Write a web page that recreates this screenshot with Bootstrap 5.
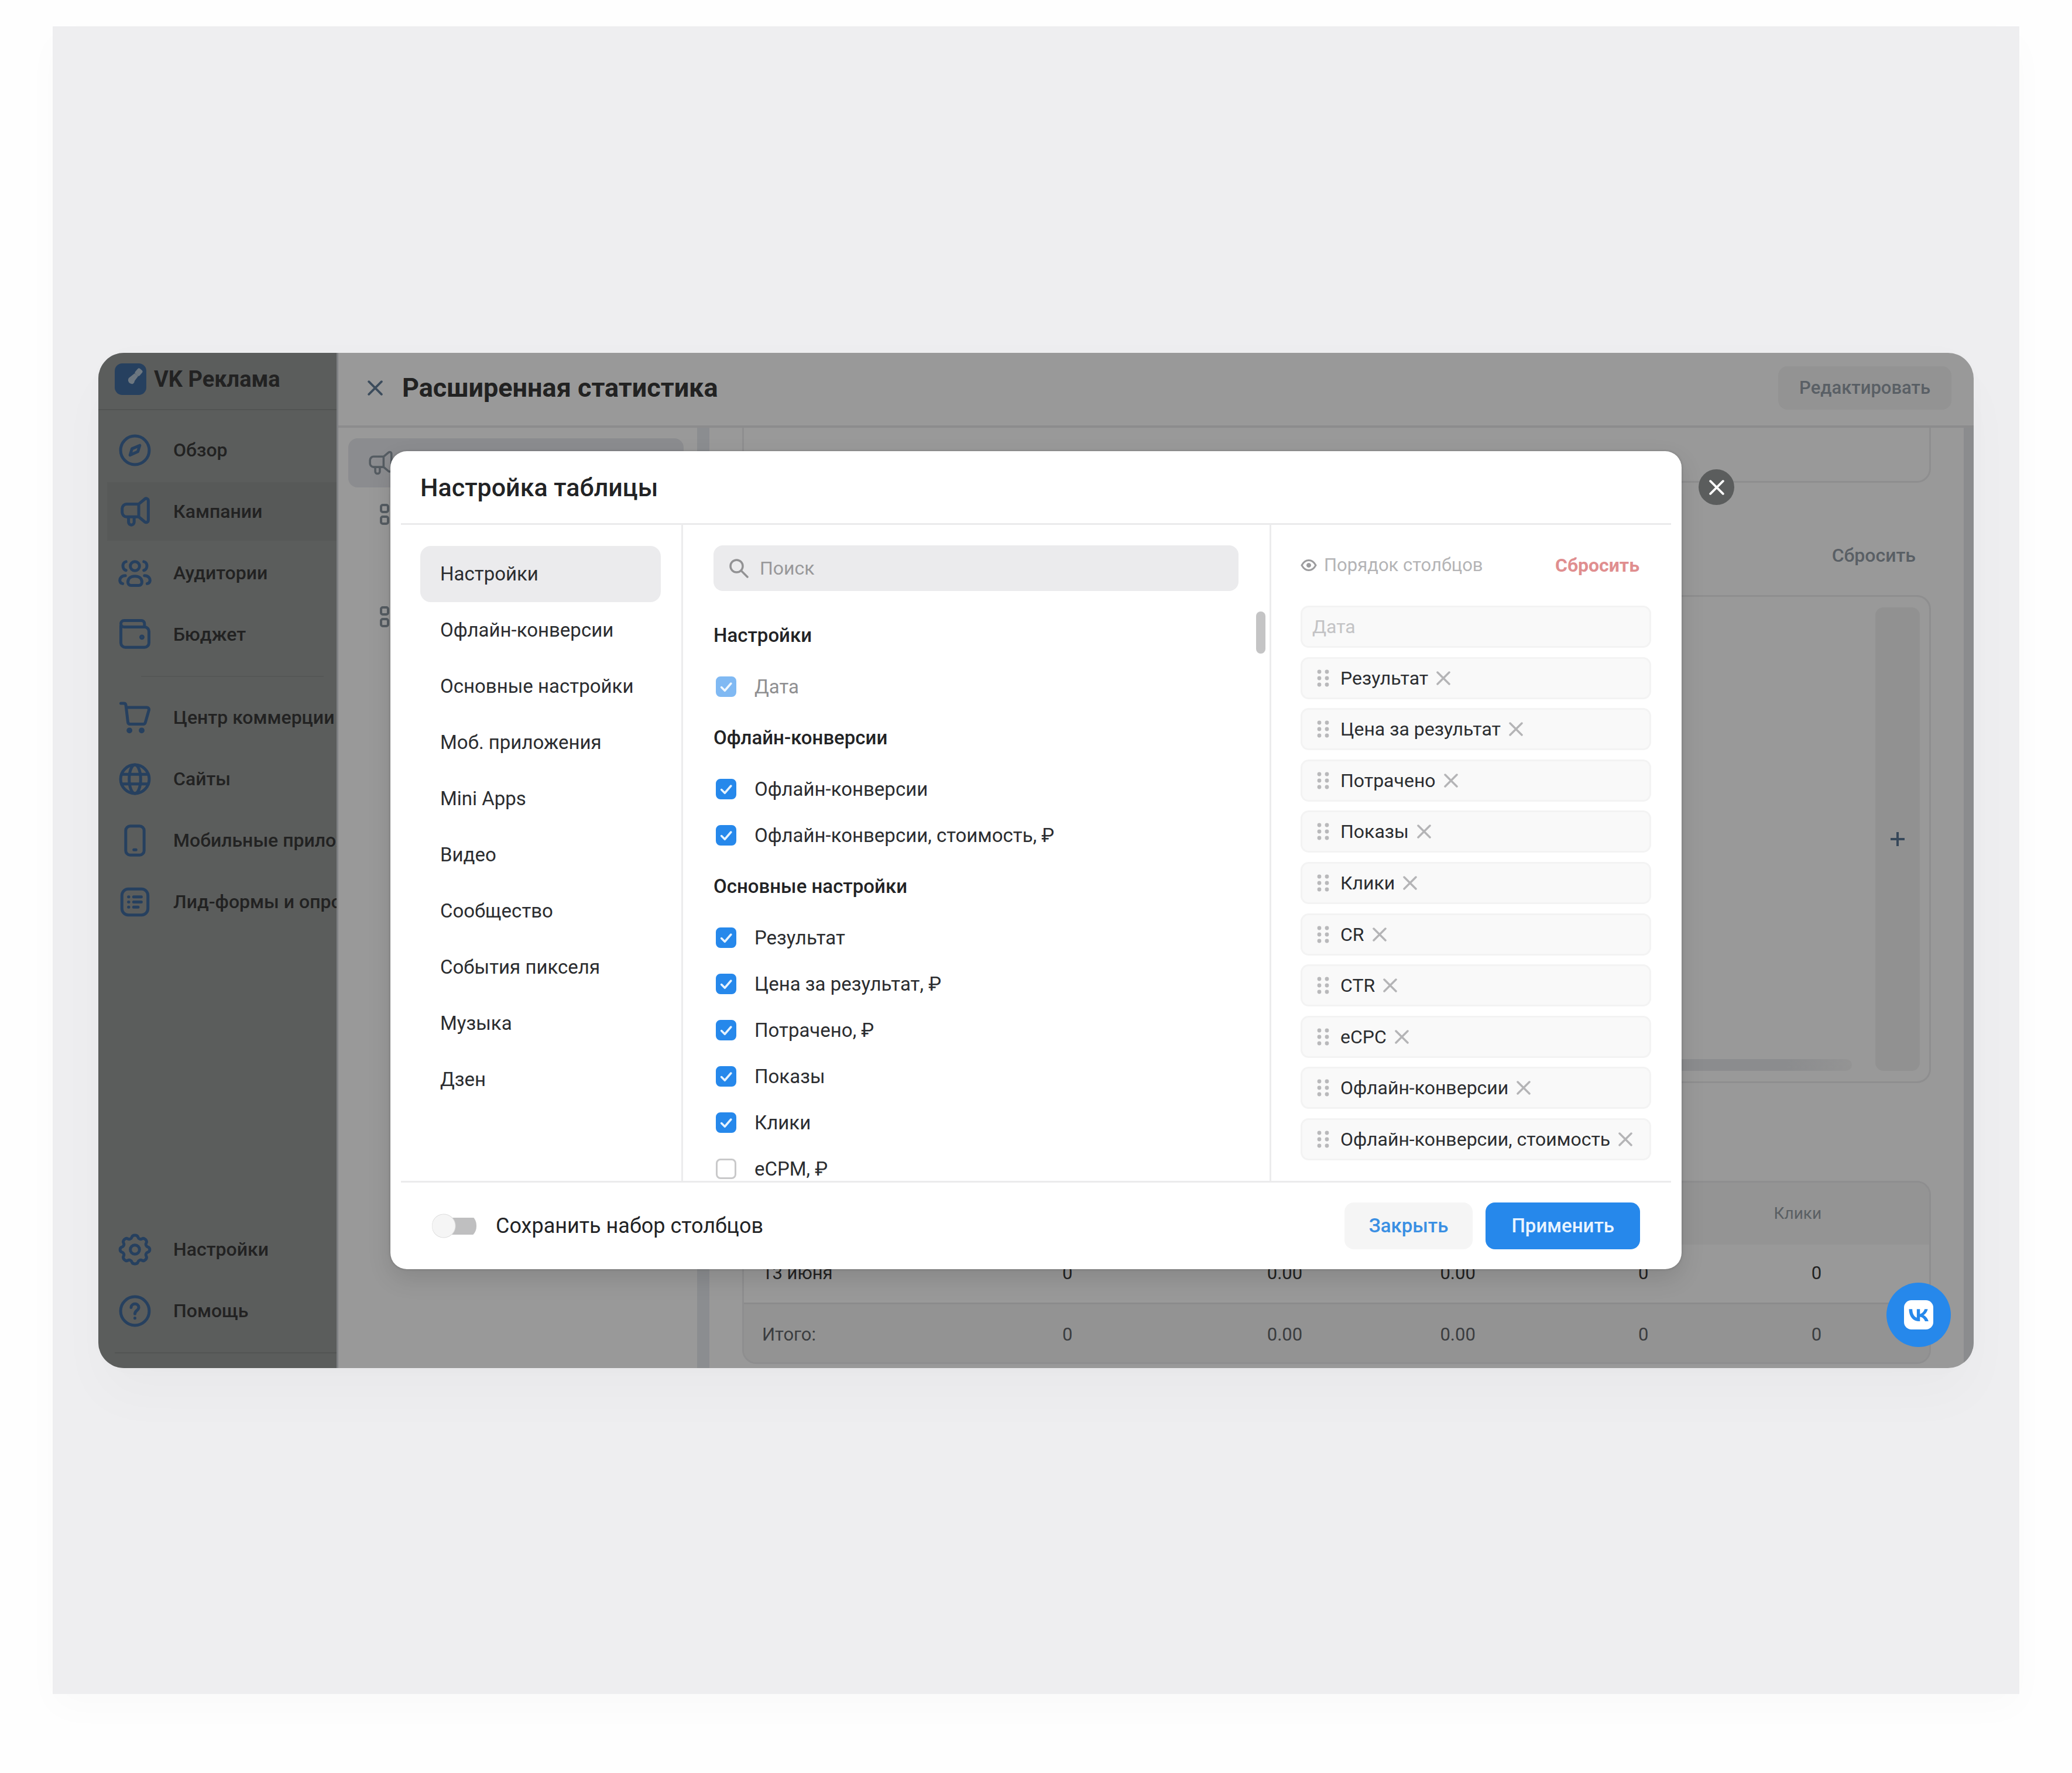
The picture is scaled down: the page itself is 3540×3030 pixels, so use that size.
<!DOCTYPE html>
<html lang="ru">
<head>
<meta charset="utf-8">
<meta name="viewport" content="width=device-width, initial-scale=1">
<title>VK Реклама — Настройка таблицы</title>
<link href="https://cdn.jsdelivr.net/npm/bootstrap@5.3.0/dist/css/bootstrap.min.css" rel="stylesheet">
<style>
  body { background: #fefefe; font-family: Roboto, "Liberation Sans", sans-serif; font-size: 32px; line-height: 40px; color: #222325; }
  svg { display: block; flex: none; }
  .ic { fill: none; stroke: currentColor; stroke-width: 2; stroke-linecap: round; stroke-linejoin: round; }
  .stage { margin: 45px 90px 135px; padding: 60px 78px; min-height: calc(100vh - 180px); background: #eeeef0; box-shadow: 0 24px 60px rgba(0,0,0,.02); }
  .app-window { border-radius: 44px; background: #999; box-shadow: 0 50px 90px rgba(0,0,0,.025), 0 0 60px rgba(0,0,0,.01); }
  .app-shell { border-radius: 44px; }

  /* sidebar */
  .side { width: 410px; flex: none; background: #5b5d5c; border-right: 3px solid #7f8184; color: #222; font-weight: 500; }
  .brand { height: 98px; padding: 0 28px 6px; gap: 13px; border-bottom: 2px solid #525453; font-size: 38px; font-weight: 700; color: #222; }
  .side-link { height: 105px; padding-left: 32px; gap: 35px; color: #222; text-decoration: none; white-space: nowrap; }
  .side-link svg { width: 61px; height: 61px; color: #26405f; stroke-width: 2.300; }
  .side-link.active-link { background: linear-gradient(#575958, #575958) 15px center / 100% 100px no-repeat; }
  .side-sep { margin: 18px 22px 17px 73px; border-top: 2px solid #555756; }
  .side-foot { margin: 18px 0 25px 28px; border-top: 2px solid #525453; }

  /* page behind the dialog */
  .page-head { height: 128px; padding: 0 38px 4px 46px; border-bottom: 4px solid #8c8c8d; }
  .page-title { font-size: 45px; line-height: 52px; font-weight: 700; color: #222; margin: 0 0 0 33px; }
  .bare-btn { border: 0; padding: 0; background: none; line-height: 0; color: #3c4c5c; }
  .edit-btn { height: 74px; padding: 0 36px; border-radius: 16px; background: #939393; color: #595f65; font-size: 31px; font-weight: 500; border: 0; }
  .tree { width: 613px; flex: none; padding: 18px 23px 0 17px; color: #555c62; }
  .tree-item { height: 84px; padding-left: 30px; border-radius: 16px; background: #8b8c8f; }
  .tree-sub { height: 88px; padding-left: 54px; margin-bottom: 87px; }
  .tree-item + .tree-sub { margin-top: 2px; }
  .rail { width: 21px; flex: none; background: #8b8d90; }
  .rail-end { width: 17px; flex: none; background: #8b8c8e; }
  .report { padding: 0 56px 7px; }
  .pane { border: 3px solid #8e8e8f; border-radius: 24px; }
  .pane-top { height: 94px; border-top: 0; border-top-left-radius: 0; border-top-right-radius: 0; }
  .reset-row { height: 192px; padding: 0 26px 0 0; }
  .reset-link { color: #595f65; text-decoration: none; font-weight: 500; font-size: 32px; margin-top: 56px; }
  .pane-chart { height: 834px; padding: 18px 16px 18px 0; }
  .chart-track { height: 20px; border-radius: 10px; background: linear-gradient(90deg, #8b8c8e 94%, #949494); margin-right: 40px; }
  .add-col { width: 76px; border: 0; border-radius: 14px; background: #919191; color: #37485a; padding: 0; }
  .pane-table { margin-top: 167px; overflow: hidden; }
  .stat-grid { table-layout: fixed; margin: 0; font-size: 31px; --bs-table-bg: transparent; }
  .stat-grid > * > tr > * { padding: 0 34px; height: 101px; border: 0; text-align: right; vertical-align: middle; color: #222; background: none; }
  .stat-grid > * > tr > :first-child { text-align: left; padding: 0 0 0 31px; }
  .stat-grid > thead > tr > th { height: 106px; background: #949494; font-size: 28px; font-weight: 400; color: #5a5f63; }
  .stat-grid > tfoot > tr > *, .stat-grid > tfoot > tr > :first-child { height: 100px; padding-top: 6px; background: #939393; border-top: 3px solid #8b8b8c; font-weight: 400; color: #3b3d40; }
  .w-a { width: 14.7%; } .w-b { width: 19.4%; } .w-c { width: 14.6%; }

  /* dialog */
  .dialog-box { width: 100%; max-width: 2206px; background: #fff; border-radius: 28px; box-shadow: 0 16px 40px rgba(0,0,0,.12), 0 0 4px rgba(0,0,0,.2); }
  .dialog-head { height: 123px; padding: 0 51px; }
  .dialog-head h2 { font-size: 43px; line-height: 52px; font-weight: 500; margin: 0; }
  .rule-line { height: 3px; margin: 0 18px; background: #ebebec; }
  .dialog-body { height: 1121px; }
  .col-nav { width: 500px; flex: none; padding: 36px 35px 0 51px; border-right: 3px solid #ececed; }
  .nav-row { height: 96px; padding: 0 34px; border-radius: 18px; color: #2b2d30; text-decoration: none; font-size: 33px; }
  .nav-row.current { background: #ebebed; }
  .col-pick { padding: 35px 0 0 52px; border-right: 3px solid #ececed; overflow: hidden; }
  .find-box { height: 78px; margin-right: 53px; padding: 0 26px; gap: 18px; border-radius: 16px; background: #ebebed; color: #929294; }
  .find-box input { border: 0; outline: 0; background: none; width: 100%; color: #222; padding: 0; }
  .find-box input::placeholder { color: #98989a; opacity: 1; }
  .pick-list { padding-top: 28px; font-size: 33px; }
  .pick-list h3 { height: 96px; line-height: 96px; font-size: 33px; font-weight: 500; margin: 0; }
  .pick-row { height: 79px; padding-left: 4px; gap: 31px; }
  .pick-row .form-check-input { width: 35px; height: 35px; margin: 0; flex: none; border: 3px solid #c9c9ca; border-radius: 8px; }
  .pick-row .form-check-input:checked { background-color: #2688eb; border-color: #2688eb; background-size: 32px; background-image: url("data:image/svg+xml,%3csvg xmlns='http://www.w3.org/2000/svg' viewBox='0 0 20 20'%3e%3cpath fill='none' stroke='%23e6f3ff' stroke-linecap='round' stroke-linejoin='round' stroke-width='2.200' d='M5 10.500l3.500 3.500 6.500-7.500'/%3e%3c/svg%3e"); }
  .pick-row label { color: #2b2d30; }
  .pick-row .form-check-input:disabled { opacity: .58; }
  .pick-row .form-check-input:disabled ~ label { color: #8f8f91; opacity: 1; }
  .thumb { position: absolute; top: 35px; right: 7px; width: 16px; height: 72px; border-radius: 8px; background: #c4c4c5; }
  .col-order { width: 701px; flex: none; padding: 0 52px 35px 50px; }
  .order-head { height: 138px; padding: 0 20px 0 0; }
  .order-head span { color: #b4b4b6; margin-left: 12px; font-size: 31px; }
  .order-head a { color: #e08e8f; font-weight: 700; text-decoration: none; margin-left: auto; }
  .chip { height: 72px; padding: 0 21px 0 25px; border: 3px solid #f3f3f3; border-radius: 14px; background: #f9f9f9; white-space: nowrap; color: #2b2d30; }
  .chip.fixed-chip { padding-left: 17px; color: #c3c3c5; }
  .chip .dots { color: #b9b9bb; margin-right: 19px; }
  .chip button { color: #b4b4b6; margin-left: 14px; }
  .dialog-foot { height: 148px; padding: 0 71px; }
  .save-switch { width: 76px; height: 42px; margin: 0; border: 0; padding: 0; appearance: none; flex: none;
    background: radial-gradient(circle at 20px 21px, #f5f5f5 19px, #dcdcdc 20px, transparent 21px), linear-gradient(#bfbfc0, #bfbfc0) right center / 60px 29px no-repeat; clip-path: inset(0 0 0 0 round 20px); }
  .foot-label { font-size: 36px; margin-left: 33px; }
  .foot-btn { height: 80px; border-radius: 16px; border: 0; font-size: 33px; font-weight: 500; }
  .foot-btn.plain { background: #f5f5f5; color: #3a8fe3; padding: 0 42px; }
  .foot-btn.main-act { background: #2688eb; color: #e9f4ff; padding: 0 44px; margin-left: 22px; }
  .close-round { position: absolute; left: 100%; top: 31px; margin-left: 29px; width: 61px; height: 61px; border-radius: 50%; border: 0; padding: 0; background: #5b5d5d; color: #fff; }
  .vk-help { position: absolute; right: 39px; bottom: 36px; width: 110px; height: 110px; border-radius: 50%; background: #2688eb; }
  .vk-help svg { width: 50px; height: 50px; }
</style>
<script src="https://cdn.jsdelivr.net/npm/bootstrap@5.3.0/dist/js/bootstrap.bundle.min.js"></script>
</head>
<body>
<svg width="0" height="0" class="position-absolute" aria-hidden="true">
  <symbol id="cross" viewBox="0 0 24 24"><path d="M2 2l20 20M22 2L2 22" fill="none" stroke="currentColor" stroke-width="3.500" stroke-linecap="round"/></symbol>
  <symbol id="dots" viewBox="0 0 21 30"><g fill="currentColor"><circle cx="4" cy="4" r="3.400"/><circle cx="17" cy="4" r="3.400"/><circle cx="4" cy="15" r="3.400"/><circle cx="17" cy="15" r="3.400"/><circle cx="4" cy="26" r="3.400"/><circle cx="17" cy="26" r="3.400"/></g></symbol>
  <symbol id="horn" viewBox="0 0 28 28"><path d="M7.500 8H17v10H7.500A3.500 3.500 0 0 1 4 14.500v-3A3.500 3.500 0 0 1 7.500 8zM17 8l4.800-4c1-.8 2.700-.2 2.700 1.300v15.400c0 1.500-1.700 2.100-2.700 1.300L17 18M9 18.200v4a2.200 2.200 0 0 0 4.400 0v-4"/></symbol>
  <symbol id="four" viewBox="0 0 36 36"><g fill="none" stroke="currentColor" stroke-width="4"><rect x="2" y="2" width="12" height="12" rx="3"/><rect x="22" y="2" width="12" height="12" rx="3"/><rect x="2" y="22" width="12" height="12" rx="3"/><rect x="22" y="22" width="12" height="12" rx="3"/></g></symbol>
</svg>

<main class="stage d-flex flex-column justify-content-center">
  <div class="app-window position-relative">
    <div class="app-shell d-flex overflow-hidden">
      <aside class="side d-flex flex-column overflow-hidden">
        <div class="brand d-flex align-items-center">
          <svg width="54" height="54" viewBox="0 0 54 54"><rect width="54" height="54" rx="13" fill="#26405f"/><path d="M24 25l10-8 6 5-6 8c-1 6-5 6-8 4-3-2-4-6-2-9z" fill="#6d7780"/><rect x="36" y="9" width="10" height="12" rx="3" transform="rotate(40 41 15)" fill="#6d7780"/></svg>
          <span>VK Реклама</span>
        </div>
        <nav class="d-flex flex-column pt-3">
          <a class="side-link d-flex align-items-center" href="#"><svg class="ic" viewBox="0 0 28 28"><circle cx="14" cy="14" r="11.200"/><path d="M17.800 10.200l-1.500 4.800-6.100 2.800 1.500-5z"/></svg>Обзор</a>
          <a class="side-link active-link d-flex align-items-center" href="#"><svg class="ic" viewBox="0 0 28 28"><use href="#horn"/></svg>Кампании</a>
          <a class="side-link d-flex align-items-center" href="#"><svg class="ic" viewBox="0 0 28 28"><circle cx="14" cy="8.500" r="3.600"/><path d="M8.500 21c0-3 2.400-4.600 5.500-4.600s5.500 1.600 5.500 4.600c0 1.600-1 2.600-2.600 2.600h-5.800c-1.600 0-2.600-1-2.600-2.600zM7 5c-3.200.5-3.200 6 0 6.800M21 5c3.200.5 3.200 6 0 6.800M6.500 16c-3 0-4.500 2-4.300 4 .1 1.200.8 2 2.200 2.200M21.500 16c3 0 4.500 2 4.300 4-.1 1.200-.8 2-2.200 2.200"/></svg>Аудитории</a>
          <a class="side-link d-flex align-items-center" href="#"><svg class="ic" viewBox="0 0 28 28"><path d="M3 7v13.500A3.500 3.500 0 0 0 6.500 24h15a3.500 3.500 0 0 0 3.500-3.500v-9A3.500 3.500 0 0 0 21.500 8H5.500a2.500 2.500 0 0 1 0-5H19c1.500 0 2.500 1 2.500 2.500V8"/><circle cx="19.500" cy="16" r=".9"/></svg>Бюджет</a>
          <div class="side-sep"></div>
          <a class="side-link d-flex align-items-center" href="#"><svg class="ic" viewBox="0 0 28 28"><path d="M3 2.800h2.300c.9 0 1.500.5 1.600 1.400l1.600 13.300c.1.900.8 1.500 1.700 1.500h10.300c.8 0 1.500-.5 1.700-1.300L25 8c.2-1-.5-2-1.700-2H7.300"/><circle cx="9.700" cy="24" r="1.100" fill="currentColor"/><circle cx="19.300" cy="24" r="1.100" fill="currentColor"/></svg>Центр коммерции</a>
          <a class="side-link d-flex align-items-center" href="#"><svg class="ic" viewBox="0 0 28 28"><circle cx="14" cy="14" r="11.200"/><ellipse cx="14" cy="14" rx="4.500" ry="11.200"/><path d="M3.700 10.200h20.600M3.700 17.800h20.600"/></svg>Сайты</a>
          <a class="side-link d-flex align-items-center" href="#"><svg class="ic" viewBox="0 0 28 28"><rect x="6.800" y="2.600" width="14.400" height="22.800" rx="3.500"/><path d="M13.200 21.200h1.600"/></svg>Мобильные приложения</a>
          <a class="side-link d-flex align-items-center" href="#"><svg class="ic" viewBox="0 0 28 28"><rect x="3.800" y="3.800" width="20.400" height="20.400" rx="5"/><path d="M9 10h.2M9 14h.2M9 18h.2M13 10h6M13 14h6M13 18h3.500"/></svg>Лид-формы и опросы</a>
        </nav>
        <div class="mt-auto">
          <a class="side-link d-flex align-items-center" href="#"><svg class="ic" viewBox="0 0 28 28"><path d="M11.600 4.200c.6-1.900 4.200-1.900 4.800 0 .4 1.400 1.900 2 3.200 1.300 1.800-1 4.300 1.500 3.300 3.300-.7 1.300-.1 2.800 1.300 3.200 1.900.6 1.900 3.400 0 4-1.400.4-2 1.900-1.300 3.200 1 1.800-1.500 4.300-3.300 3.300-1.300-.7-2.800-.1-3.200 1.300-.6 1.900-4.200 1.900-4.800 0-.4-1.400-1.900-2-3.200-1.300-1.800 1-4.300-1.500-3.300-3.300.7-1.300.1-2.800-1.300-3.200-1.900-.6-1.900-3.400 0-4 1.400-.4 2-1.900 1.300-3.200-1-1.800 1.500-4.300 3.300-3.300 1.300.7 2.800.1 3.200-1.300z"/><circle cx="14" cy="14" r="3.600"/></svg>Настройки</a>
          <a class="side-link d-flex align-items-center" href="#"><svg class="ic" viewBox="0 0 28 28"><circle cx="14" cy="14" r="11.200"/><path d="M11 11.200c.2-3.700 6-3.700 6 0 0 2.400-3 2.300-3 5M14 19.500v.1"/></svg>Помощь</a>
          <div class="side-foot"></div>
        </div>
      </aside>

      <section class="flex-grow-1 d-flex flex-column">
        <header class="page-head d-flex align-items-center">
          <button class="bare-btn ms-1" type="button" aria-label="Закрыть"><svg width="26" height="26"><use href="#cross"/></svg></button>
          <h1 class="page-title">Расширенная статистика</h1>
          <button class="edit-btn ms-auto" type="button">Редактировать</button>
        </header>
        <div class="d-flex flex-grow-1">
          <div class="tree">
            <div class="tree-item d-flex align-items-center"><svg class="ic" width="50" height="50" viewBox="0 0 28 28"><use href="#horn"/></svg></div>
            <div class="tree-sub d-flex align-items-center"><svg width="36" height="36"><use href="#four"/></svg></div>
            <div class="tree-sub d-flex align-items-center"><svg width="36" height="36"><use href="#four"/></svg></div>
          </div>
          <div class="rail"></div>
          <div class="report flex-grow-1">
            <div class="pane pane-top"></div>
            <div class="reset-row d-flex justify-content-end align-items-center"><a class="reset-link mb-auto pt-5" href="#">Сбросить</a></div>
            <div class="pane pane-chart d-flex">
              <div class="flex-grow-1 d-flex flex-column justify-content-end"><div class="chart-track"></div></div>
              <button class="add-col d-flex align-items-center justify-content-center" type="button" aria-label="Добавить"><svg width="28" height="28" viewBox="0 0 28 28"><path d="M14 2v24M2 14h24" stroke="currentColor" stroke-width="4" fill="none"/></svg></button>
            </div>
            <div class="pane pane-table">
              <table class="table stat-grid">
                <colgroup><col class="w-a"><col class="w-a"><col class="w-b"><col class="w-c"><col class="w-c"><col class="w-c"><col></colgroup>
                <thead><tr><th></th><th></th><th></th><th></th><th></th><th>Клики</th><th></th></tr></thead>
                <tbody><tr><td>13 июня</td><td>0</td><td>0.00</td><td>0.00</td><td>0</td><td>0</td><td></td></tr></tbody>
                <tfoot><tr><td>Итого:</td><td>0</td><td>0.00</td><td>0.00</td><td>0</td><td>0</td><td></td></tr></tfoot>
              </table>
            </div>
          </div>
          <div class="rail-end"></div>
        </div>
      </section>
    </div>

    <div class="position-absolute top-0 start-0 w-100 h-100 d-flex align-items-center justify-content-center">
      <div class="dialog-box position-relative" role="dialog" aria-label="Настройка таблицы">
        <div class="dialog-head d-flex align-items-center"><h2>Настройка таблицы</h2></div>
        <div class="rule-line"></div>
        <div class="dialog-body d-flex">
          <nav class="col-nav">
            <a class="nav-row current d-flex align-items-center" href="#">Настройки</a>
            <a class="nav-row d-flex align-items-center" href="#">Офлайн-конверсии</a>
            <a class="nav-row d-flex align-items-center" href="#">Основные настройки</a>
            <a class="nav-row d-flex align-items-center" href="#">Моб. приложения</a>
            <a class="nav-row d-flex align-items-center" href="#">Mini Apps</a>
            <a class="nav-row d-flex align-items-center" href="#">Видео</a>
            <a class="nav-row d-flex align-items-center" href="#">Сообщество</a>
            <a class="nav-row d-flex align-items-center" href="#">События пикселя</a>
            <a class="nav-row d-flex align-items-center" href="#">Музыка</a>
            <a class="nav-row d-flex align-items-center" href="#">Дзен</a>
          </nav>
          <div class="col-pick flex-grow-1">
            <label class="find-box d-flex align-items-center">
              <svg width="35" height="35" viewBox="0 0 35 35" fill="none" stroke="currentColor" stroke-width="3.500" stroke-linecap="round"><circle cx="13.500" cy="13.500" r="10.500"/><path d="M21.500 21.500l10.500 10.500"/></svg>
              <input type="text" placeholder="Поиск" aria-label="Поиск">
            </label>
            <div class="pick-list position-relative">
              <h3>Настройки</h3>
              <div class="pick-row d-flex align-items-center"><input class="form-check-input" type="checkbox" id="c1" checked disabled><label for="c1">Дата</label></div>
              <h3>Офлайн-конверсии</h3>
              <div class="pick-row d-flex align-items-center"><input class="form-check-input" type="checkbox" id="c2" checked><label for="c2">Офлайн-конверсии</label></div>
              <div class="pick-row d-flex align-items-center"><input class="form-check-input" type="checkbox" id="c3" checked><label for="c3">Офлайн-конверсии, стоимость, ₽</label></div>
              <h3>Основные настройки</h3>
              <div class="pick-row d-flex align-items-center"><input class="form-check-input" type="checkbox" id="c4" checked><label for="c4">Результат</label></div>
              <div class="pick-row d-flex align-items-center"><input class="form-check-input" type="checkbox" id="c5" checked><label for="c5">Цена за результат, ₽</label></div>
              <div class="pick-row d-flex align-items-center"><input class="form-check-input" type="checkbox" id="c6" checked><label for="c6">Потрачено, ₽</label></div>
              <div class="pick-row d-flex align-items-center"><input class="form-check-input" type="checkbox" id="c7" checked><label for="c7">Показы</label></div>
              <div class="pick-row d-flex align-items-center"><input class="form-check-input" type="checkbox" id="c8" checked><label for="c8">Клики</label></div>
              <div class="pick-row d-flex align-items-center"><input class="form-check-input" type="checkbox" id="c9"><label for="c9">eCPM, ₽</label></div>
              <div class="thumb"></div>
            </div>
          </div>
          <div class="col-order d-flex flex-column">
            <div class="order-head d-flex align-items-center">
              <svg width="28" height="28" viewBox="0 0 28 28" fill="none" stroke="#9c9c9e" stroke-width="3"><path d="M2 14c3-5.500 7-8.500 12-8.500s9 3 12 8.500c-3 5.500-7 8.500-12 8.500S5 19.500 2 14z"/><circle cx="14" cy="14" r="3.500" fill="#9c9c9e" stroke-width="1"/></svg>
              <span>Порядок столбцов</span>
              <a href="#">Сбросить</a>
            </div>
            <div class="flex-grow-1 d-flex flex-column justify-content-between">
              <div class="chip fixed-chip d-flex align-items-center">Дата</div>
              <div class="chip d-flex align-items-center"><svg class="dots" width="21" height="30"><use href="#dots"/></svg>Результат<button class="bare-btn" type="button" aria-label="Убрать"><svg width="24" height="24"><use href="#cross"/></svg></button></div>
              <div class="chip d-flex align-items-center"><svg class="dots" width="21" height="30"><use href="#dots"/></svg>Цена за результат<button class="bare-btn" type="button" aria-label="Убрать"><svg width="24" height="24"><use href="#cross"/></svg></button></div>
              <div class="chip d-flex align-items-center"><svg class="dots" width="21" height="30"><use href="#dots"/></svg>Потрачено<button class="bare-btn" type="button" aria-label="Убрать"><svg width="24" height="24"><use href="#cross"/></svg></button></div>
              <div class="chip d-flex align-items-center"><svg class="dots" width="21" height="30"><use href="#dots"/></svg>Показы<button class="bare-btn" type="button" aria-label="Убрать"><svg width="24" height="24"><use href="#cross"/></svg></button></div>
              <div class="chip d-flex align-items-center"><svg class="dots" width="21" height="30"><use href="#dots"/></svg>Клики<button class="bare-btn" type="button" aria-label="Убрать"><svg width="24" height="24"><use href="#cross"/></svg></button></div>
              <div class="chip d-flex align-items-center"><svg class="dots" width="21" height="30"><use href="#dots"/></svg>CR<button class="bare-btn" type="button" aria-label="Убрать"><svg width="24" height="24"><use href="#cross"/></svg></button></div>
              <div class="chip d-flex align-items-center"><svg class="dots" width="21" height="30"><use href="#dots"/></svg>CTR<button class="bare-btn" type="button" aria-label="Убрать"><svg width="24" height="24"><use href="#cross"/></svg></button></div>
              <div class="chip d-flex align-items-center"><svg class="dots" width="21" height="30"><use href="#dots"/></svg>eCPC<button class="bare-btn" type="button" aria-label="Убрать"><svg width="24" height="24"><use href="#cross"/></svg></button></div>
              <div class="chip d-flex align-items-center"><svg class="dots" width="21" height="30"><use href="#dots"/></svg>Офлайн-конверсии<button class="bare-btn" type="button" aria-label="Убрать"><svg width="24" height="24"><use href="#cross"/></svg></button></div>
              <div class="chip d-flex align-items-center"><svg class="dots" width="21" height="30"><use href="#dots"/></svg>Офлайн-конверсии, стоимость<button class="bare-btn" type="button" aria-label="Убрать"><svg width="24" height="24"><use href="#cross"/></svg></button></div>
            </div>
          </div>
        </div>
        <div class="rule-line"></div>
        <div class="dialog-foot d-flex align-items-center">
          <input class="save-switch" type="checkbox" role="switch" id="saveSet">
          <label class="foot-label" for="saveSet">Сохранить набор столбцов</label>
          <button class="foot-btn plain ms-auto" type="button">Закрыть</button>
          <button class="foot-btn main-act" type="button">Применить</button>
        </div>
        <button class="close-round d-flex align-items-center justify-content-center" type="button" aria-label="Закрыть"><svg width="26" height="26"><use href="#cross"/></svg></button>
      </div>
    </div>

    <a class="vk-help d-flex align-items-center justify-content-center" href="#" aria-label="Поддержка">
      <svg viewBox="0 0 48 48"><rect width="48" height="48" rx="12" fill="#fff"/><path fill="#2688eb" d="M25.540 34.580c-10.940 0-17.180-7.500-17.440-19.980h5.480c.18 9.160 4.220 13.040 7.420 13.840V14.600h5.160v7.900c3.160-.34 6.480-3.940 7.600-7.900h5.160c-.86 4.880-4.460 8.480-7.020 9.960 2.560 1.200 6.660 4.340 8.220 10.020h-5.680c-1.220-3.800-4.260-6.740-8.280-7.140v7.140z"/></svg>
    </a>
  </div>
</main>
</body>
</html>
